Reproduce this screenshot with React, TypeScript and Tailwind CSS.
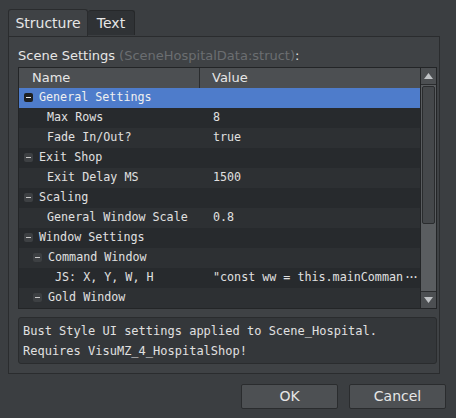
type Row = {
  name: string;
  value?: string;
  level: number;
  group?: boolean;
  selected?: boolean;
  cut?: boolean;
};

const rows: Row[] = [
  { name: 'General Settings', level: 0, group: true, selected: true },
  { name: 'Max Rows', value: '8', level: 1 },
  { name: 'Fade In/Out?', value: 'true', level: 1 },
  { name: 'Exit Shop', level: 0, group: true },
  { name: 'Exit Delay MS', value: '1500', level: 1 },
  { name: 'Scaling', level: 0, group: true },
  { name: 'General Window Scale', value: '0.8', level: 1 },
  { name: 'Window Settings', level: 0, group: true },
  { name: 'Command Window', level: 1, group: true },
  { name: 'JS: X, Y, W, H', value: '"const ww = this.mainComman', level: 2, cut: true },
  { name: 'Gold Window', level: 1, group: true },
];

const indent = ['pl-[5px]', 'pl-[14px]', 'pl-[22px]'];
const itemIndent = ['pl-[20px]', 'pl-[28px]', 'pl-[36px]'];

function MinusBox({ selected }: { selected?: boolean }) {
  return (
    <span
      className={`mr-[6px] flex h-[9px] w-[9px] items-center justify-center rounded-[2px] ${
        selected ? 'bg-[#1e2022]' : 'bg-[#3d4043]'
      }`}
    >
      <span className={`h-[1px] w-[5px] ${selected ? 'bg-[#e8e8e8]' : 'bg-[#c8c8c8]'}`} />
    </span>
  );
}

export default function App() {
  return (
    <div
      className="flex h-[418px] w-[456px] flex-col bg-[#3b3e41] text-[#e2e2e2]"
      style={{ fontFamily: '"DejaVu Sans", sans-serif' }}
    >
      {/* Tabs */}
      <div className="flex pl-[8px] pt-[9px]">
        <div className="flex h-[27px] w-[80px] items-center justify-center rounded-t-[3px] border border-b-0 border-[#2a2c2e] bg-[#3f4245] text-[14px] text-[#e6e6e6]">
          Structure
        </div>
        <div className="mt-[1px] flex h-[25px] w-[47px] items-center justify-center rounded-t-[3px] border border-b-0 border-l-0 border-[#26282a] bg-[#2f3235] text-[14px] text-[#e6e6e6]">
          Text
        </div>
      </div>

      {/* Panel */}
      <div className="mx-[8px] flex h-[338px] w-[432px] flex-col border border-[#2a2c2e] bg-[#3f4245] pl-[9px] pr-[2px]">
        <div className="flex h-[30px] items-end pb-[2px] text-[13px]">
          <span className="text-[#e6e6e6]">Scene Settings</span>
          <span className="ml-[4px] text-[#6b6e71]">(SceneHospitalData:struct)</span>
          <span className="text-[#e6e6e6]">:</span>
        </div>

        {/* Table */}
        <div className="flex h-[242px] border border-[#232527] bg-[#2a2d30]">
          <div className="flex flex-1 flex-col">
            <div className="flex h-[21px] bg-[#4c4f52] text-[13px] text-[#e6e6e6]">
              <div className="flex w-[181px] items-center border-r border-[#2a2c2e] pl-[13px]">Name</div>
              <div className="flex flex-1 items-center pl-[12px]">Value</div>
            </div>
            <div
              className="flex flex-col text-[11.7px]"
              style={{ fontFamily: '"DejaVu Sans Mono", monospace' }}
            >
              {rows.map((r, i) => (
                <div
                  key={i}
                  className={`flex h-[20px] items-center ${
                    r.selected ? 'bg-[#4e7ccb]' : i % 2 === 1 ? 'bg-[#272a2d]' : 'bg-[#2d3033]'
                  }`}
                >
                  <div
                    className={`flex w-[182px] items-center ${
                      r.group ? indent[r.level] : itemIndent[r.level]
                    } ${r.selected ? 'text-[#f0f0f0]' : 'text-[#e0e0e0]'}`}
                  >
                    {r.group && <MinusBox selected={r.selected} />}
                    <span className="whitespace-pre">{r.name}</span>
                  </div>
                  <div className="flex-1 whitespace-pre pl-[12px] text-[#e0e0e0]">
                    {r.value}
                    {r.cut && <span className="ml-[1px] tracking-[-3px]">···</span>}
                  </div>
                </div>
              ))}
            </div>
          </div>

          {/* Scrollbar */}
          <div className="flex w-[16px] flex-col border-l border-[#232527] bg-[#5a5d60]">
            <div className="flex h-[17px] items-center justify-center border-b border-[#2a2c2e] bg-[#4c4f52]">
              <svg width="9" height="6" viewBox="0 0 9 6">
                <path d="M4.5 0 L9 6 L0 6 Z" fill="#bfc2c5" />
              </svg>
            </div>
            <div className="mx-[1px] mt-[1px] h-[138px] rounded-[2px] border border-[#2a2c2e] bg-[#45484b]" />
            <div className="flex-1" />
            <div className="flex h-[17px] items-center justify-center border-t border-[#2a2c2e] bg-[#4c4f52]">
              <svg width="9" height="6" viewBox="0 0 9 6">
                <path d="M0 0 L9 0 L4.5 6 Z" fill="#bfc2c5" />
              </svg>
            </div>
          </div>
        </div>

        {/* Description */}
        <div
          className="mt-[8px] flex h-[47px] flex-col justify-center rounded-[3px] border border-[#2a2c2e] bg-[#34373a] pl-[4px] text-[12px] leading-[20px] text-[#e0e0e0]"
          style={{ fontFamily: '"DejaVu Sans Mono", monospace' }}
        >
          <div>Bust Style UI settings applied to Scene_Hospital.</div>
          <div>Requires VisuMZ_4_HospitalShop!</div>
        </div>
      </div>

      {/* Buttons */}
      <div className="flex justify-end gap-[11px] pr-[10px] pt-[10px]">
        <button className="h-[25px] w-[97px] rounded-[2px] border border-[#2a2c2e] bg-[#4d5053] text-[14px] text-[#e6e6e6]">
          OK
        </button>
        <button className="h-[25px] w-[97px] rounded-[2px] border border-[#2a2c2e] bg-[#4d5053] text-[14px] text-[#e6e6e6]">
          Cancel
        </button>
      </div>
    </div>
  );
}
